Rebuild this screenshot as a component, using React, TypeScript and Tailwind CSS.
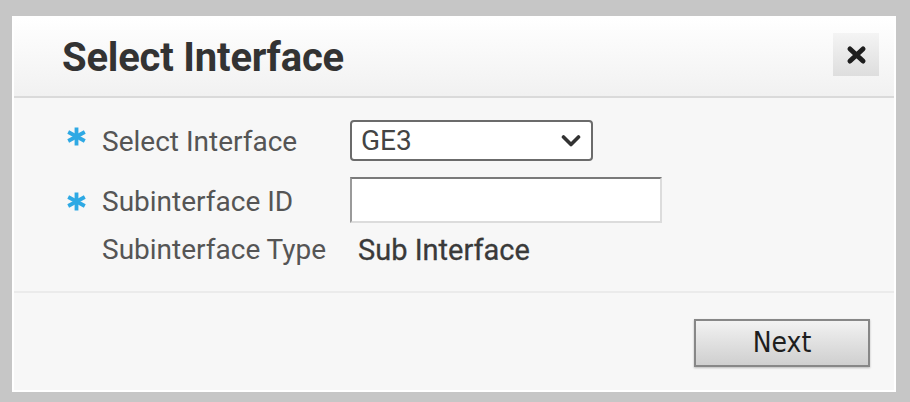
import React from "react";

function Star({ className }: { className?: string }) {
  return (
    <svg width="21" height="19" viewBox="0 0 21 19" className={className}>
      <g stroke="#2ea9e4" strokeWidth="3.8" strokeLinecap="butt">
        <path d="M10.5 0.5 V18.5" />
        <path d="M2.2 5 L18.8 14" />
        <path d="M18.8 5 L2.2 14" />
      </g>
    </svg>
  );
}

export default function App() {
  const roboto = { fontFamily: "Roboto, 'Liberation Sans', sans-serif" };
  return (
    <div className="w-[910px] h-[402px] bg-[#c6c6c6] pt-[16px] pl-[12px]" style={roboto}>
      <div className="w-[884px] h-[376px] bg-white p-[2px] flex flex-col">
        {/* header */}
        <div className="h-[80px] shrink-0 flex items-center justify-between pl-[48px] pr-[15px] bg-gradient-to-b from-[#ffffff] to-[#f1f1f1] border-b-2 border-[#dadada]">
          <h1 className="text-[40px] font-bold text-[#333333] leading-none mt-[2px] tracking-[-0.2px]">Select Interface</h1>
          <button className="w-[46px] h-[43px] flex items-center justify-center bg-gradient-to-b from-[#f4f4f4] to-[#dedede] mt-[-5px]">
            <svg width="21" height="20" viewBox="0 0 21 20">
              <path d="M4 4 L17 16 M17 4 L4 16" stroke="#1e1e1e" strokeWidth="5" strokeLinecap="round" />
            </svg>
          </button>
        </div>
        {/* body */}
        <div className="bg-[#f7f7f7] pt-[22px] pb-[24px] flex flex-col">
          <div className="flex items-center h-[41px]">
            <div className="w-[52px] shrink-0" />
            <span className="w-[36px] flex">
              <Star className="mt-[-8px]" />
            </span>
            <span className="w-[248px] text-[28px] leading-[34px] text-[#555555] mt-[3px]">Select Interface</span>
            <div className="w-[243px] h-[41px] border-2 border-[#6b6b6b] rounded-[4px] bg-white flex items-center justify-between pl-[9px] pr-[10px]">
              <span className="text-[28px] leading-none text-[#444444]">GE3</span>
              <svg width="20" height="14" viewBox="0 0 20 14">
                <path d="M2.5 3 L10 10.5 L17.5 3" stroke="#333333" strokeWidth="3.6" fill="none" strokeLinecap="round" strokeLinejoin="round" />
              </svg>
            </div>
          </div>
          <div className="flex items-center h-[46px] mt-[16px]">
            <div className="w-[52px] shrink-0" />
            <span className="w-[36px] flex">
              <Star className="mt-[3px]" />
            </span>
            <span className="w-[248px] text-[28px] leading-[34px] text-[#555555] mt-[4px]">Subinterface ID</span>
            <input
              className="w-[312px] h-[46px] bg-white border-2 border-t-[#7a7a7a] border-l-[#9a9a9a] border-r-[#dcdcdc] border-b-[#dcdcdc] outline-none"
              type="text"
            />
          </div>
          <div className="flex items-center h-[34px] mt-[10px]">
            <div className="w-[88px] shrink-0" />
            <span className="w-[256px] text-[28px] leading-[34px] text-[#555555]">Subinterface Type</span>
            <span className="text-[29px] leading-[34px] font-normal text-[#3a3a3a] [-webkit-text-stroke:0.3px_#3a3a3a]">Sub Interface</span>
          </div>
        </div>
        <div className="h-[2px] bg-[#ebebeb]" />
        {/* footer */}
        <div className="flex-1 bg-[#f7f7f7] flex justify-end items-start pt-[26px] pr-[24px]">
          <button
            className="w-[176px] h-[48px] border-2 border-[#878787] bg-gradient-to-b from-[#f2f2f2] to-[#cfcfcf] text-[#1e1e1e] text-[28px] leading-none shadow-[0_1px_2px_rgba(0,0,0,0.25)] flex items-center justify-center"
            style={{ fontFamily: "'DejaVu Sans Condensed', 'DejaVu Sans', sans-serif", fontStretch: "condensed" }}
          >
            Next
          </button>
        </div>
      </div>
    </div>
  );
}
